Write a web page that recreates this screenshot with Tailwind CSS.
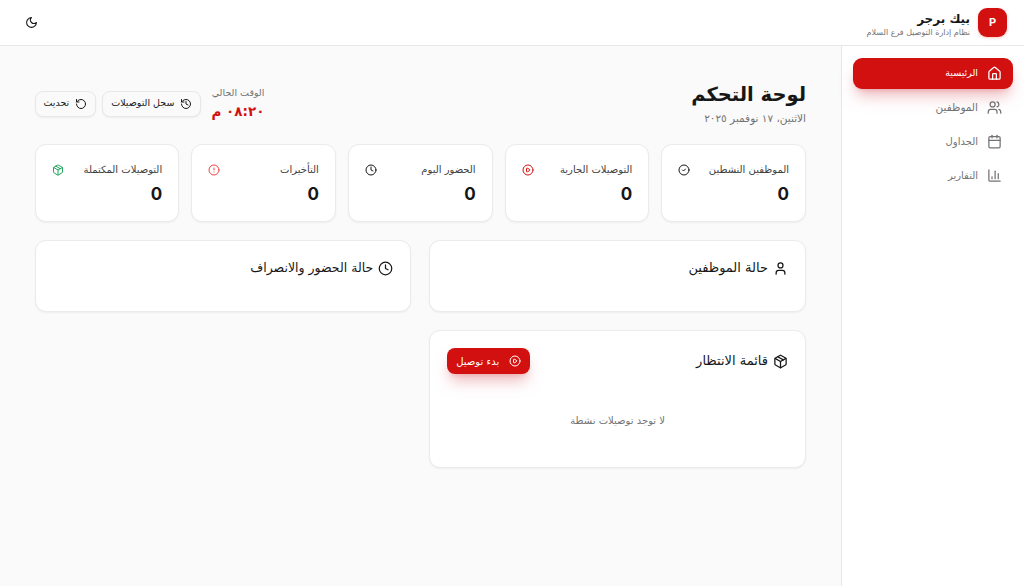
<!DOCTYPE html>
<html lang="ar" dir="rtl">
<head>
  <meta charset="UTF-8" />
  <meta name="viewport" content="width=device-width, initial-scale=1" />
  <title>لوحة التحكم | بيك برجر</title>
  <script src="https://cdn.jsdelivr.net/npm/@tailwindcss/browser@4"></script>
</head>
<body class="bg-[#fafafa] h-[586px] overflow-hidden flex flex-col text-[#171717] font-['DejaVu_Sans','Noto_Sans',sans-serif]">

  <header class="h-[46px] shrink-0 bg-white border-b border-[#e8e8e8] flex items-center justify-between pr-[17px] pl-[22px]">
    <div class="flex items-center gap-2">
      <div class="w-[29px] h-[29px] rounded-[9px] bg-[#d31010] text-white flex items-center justify-center text-[11px] font-bold font-['Inter',sans-serif] shadow-sm shadow-red-200">P</div>
      <div class="flex flex-col items-start mt-[4px]">
        <h1 class="text-[12px] leading-[16px] font-bold">بيك برجر</h1>
        <p class="text-[8px] leading-[11px] text-[#737373]">نظام إدارة التوصيل فرع السلام</p>
      </div>
    </div>
    <button class="w-4 h-4 text-[#171717]">
      <svg width="13" height="13" viewBox="0 0 24 24" fill="none" stroke="currentColor" stroke-width="2" stroke-linecap="round" stroke-linejoin="round"><path d="M12 3a6 6 0 0 0 9 9 9 9 0 1 1-9-9Z"/></svg>
    </button>
  </header>

  <div class="flex flex-1 min-h-0">
    <aside class="w-[183px] shrink-0 bg-white border-l border-[#e8e8e8] pt-[12px] px-[11px] flex flex-col gap-[3px] text-[10px]">
      <a class="h-[31px] rounded-[9px] bg-[#d31010] text-white flex items-center gap-[9px] px-[11px] shadow-lg shadow-red-700/25">
        <svg width="15" height="15" viewBox="0 0 24 24" fill="none" stroke="currentColor" stroke-width="2" stroke-linecap="round" stroke-linejoin="round"><path d="M15 21v-8a1 1 0 0 0-1-1h-4a1 1 0 0 0-1 1v8"/><path d="M3 10a2 2 0 0 1 .709-1.528l7-5.999a2 2 0 0 1 2.582 0l7 5.999A2 2 0 0 1 21 10v9a2 2 0 0 1-2 2H5a2 2 0 0 1-2-2z"/></svg>
        <span class="text-[9.5px]">الرئيسية</span>
      </a>
      <a class="h-[31px] rounded-[9px] text-[#737373] flex items-center gap-[9px] px-[11px]">
        <svg width="15" height="15" viewBox="0 0 24 24" fill="none" stroke="currentColor" stroke-width="2" stroke-linecap="round" stroke-linejoin="round"><path d="M16 21v-2a4 4 0 0 0-4-4H6a4 4 0 0 0-4 4v2"/><circle cx="9" cy="7" r="4"/><path d="M22 21v-2a4 4 0 0 0-3-3.87"/><path d="M16 3.13a4 4 0 0 1 0 7.75"/></svg>
        <span class="text-[10.5px]">الموظفين</span>
      </a>
      <a class="h-[31px] rounded-[9px] text-[#737373] flex items-center gap-[9px] px-[11px]">
        <svg width="15" height="15" viewBox="0 0 24 24" fill="none" stroke="currentColor" stroke-width="2" stroke-linecap="round" stroke-linejoin="round"><path d="M8 2v4"/><path d="M16 2v4"/><rect width="18" height="18" x="3" y="4" rx="2"/><path d="M3 10h18"/></svg>
        <span>الجداول</span>
      </a>
      <a class="h-[31px] rounded-[9px] text-[#737373] flex items-center gap-[9px] px-[11px]">
        <svg width="15" height="15" viewBox="0 0 24 24" fill="none" stroke="currentColor" stroke-width="2" stroke-linecap="round" stroke-linejoin="round"><path d="M3 3v16a2 2 0 0 0 2 2h16"/><path d="M18 17V9"/><path d="M13 17V5"/><path d="M8 17v-3"/></svg>
        <span>التقارير</span>
      </a>
    </aside>

    <main class="flex-1 pt-[34px] pr-[35px] pl-[34.5px]">
      <div class="flex items-center justify-between h-[47px]">
        <div>
          <h2 class="text-[19.5px] leading-[28px] font-bold">لوحة التحكم</h2>
          <p class="text-[10.5px] leading-[15px] mt-[2px] text-[#737373]">الاثنين، ١٧ نوفمبر ٢٠٢٥</p>
        </div>
        <div class="flex items-center gap-[6px]">
          <div class="flex flex-col items-start ml-[4px]">
            <span class="text-[9.5px] leading-[14px] text-[#737373]">الوقت الحالي</span>
            <span class="text-[13.5px] leading-[22px] font-bold text-[#d31010]">٠٨:٢٠ م</span>
          </div>
          <button class="h-[26px] px-[8px] rounded-[8px] border border-[#e8e8e8] bg-[#fafafa] flex items-center gap-[6px] text-[9.5px] shadow-xs">
            <svg width="12" height="12" viewBox="0 0 24 24" fill="none" stroke="currentColor" stroke-width="2" stroke-linecap="round" stroke-linejoin="round"><path d="M3 12a9 9 0 1 0 9-9 9.75 9.75 0 0 0-6.74 2.74L3 8"/><path d="M3 3v5h5"/><path d="M12 7v5l4 2"/></svg>
            <span>سجل التوصيلات</span>
          </button>
          <button class="h-[26px] px-[8px] rounded-[8px] border border-[#e8e8e8] bg-[#fafafa] flex items-center gap-[6px] text-[9.5px] shadow-xs">
            <svg width="12" height="12" viewBox="0 0 24 24" fill="none" stroke="currentColor" stroke-width="2" stroke-linecap="round" stroke-linejoin="round"><path d="M3 12a9 9 0 1 0 9-9 9.75 9.75 0 0 0-6.74 2.74L3 8"/><path d="M3 3v5h5"/></svg>
            <span>تحديث</span>
          </button>
        </div>
      </div>

      <div class="grid grid-cols-5 gap-3 mt-[17px]">
        <div class="h-[78px] bg-white border border-[#ebebeb] rounded-[11px] shadow-xs pt-[17px] px-[16px]">
          <div class="flex items-center justify-between h-[15px] text-[10px] text-[#404040]">
            <span>الموظفين النشطين</span>
            <svg width="12" height="12" viewBox="0 0 24 24" fill="none" stroke="#171717" stroke-width="2" stroke-linecap="round" stroke-linejoin="round"><circle cx="12" cy="12" r="10"/><path d="m9 12 2 2 4-4"/></svg>
          </div>
          <div class="mt-[5px] text-[17px] leading-[24px] font-bold font-['Inter',sans-serif]">0</div>
        </div>
        <div class="h-[78px] bg-white border border-[#ebebeb] rounded-[11px] shadow-xs pt-[17px] px-[16px]">
          <div class="flex items-center justify-between h-[15px] text-[10px] text-[#404040]">
            <span>التوصيلات الجارية</span>
            <svg width="12" height="12" viewBox="0 0 24 24" fill="none" stroke="#d31010" stroke-width="2" stroke-linecap="round" stroke-linejoin="round"><circle cx="12" cy="12" r="10"/><path d="M9 9.003a1 1 0 0 1 1.517-.859l4.997 2.997a1 1 0 0 1 0 1.718l-4.997 2.997A1 1 0 0 1 9 14.996z"/></svg>
          </div>
          <div class="mt-[5px] text-[17px] leading-[24px] font-bold font-['Inter',sans-serif]">0</div>
        </div>
        <div class="h-[78px] bg-white border border-[#ebebeb] rounded-[11px] shadow-xs pt-[17px] px-[16px]">
          <div class="flex items-center justify-between h-[15px] text-[10px] text-[#404040]">
            <span>الحضور اليوم</span>
            <svg width="12" height="12" viewBox="0 0 24 24" fill="none" stroke="#171717" stroke-width="2" stroke-linecap="round" stroke-linejoin="round"><circle cx="12" cy="12" r="10"/><path d="M12 6v6l4 2"/></svg>
          </div>
          <div class="mt-[5px] text-[17px] leading-[24px] font-bold font-['Inter',sans-serif]">0</div>
        </div>
        <div class="h-[78px] bg-white border border-[#ebebeb] rounded-[11px] shadow-xs pt-[17px] px-[16px]">
          <div class="flex items-center justify-between h-[15px] text-[10px] text-[#404040]">
            <span>التأخيرات</span>
            <svg width="12" height="12" viewBox="0 0 24 24" fill="none" stroke="#ef4444" stroke-width="2" stroke-linecap="round" stroke-linejoin="round"><circle cx="12" cy="12" r="10"/><path d="M12 8v4"/><path d="M12 16h.01"/></svg>
          </div>
          <div class="mt-[5px] text-[17px] leading-[24px] font-bold font-['Inter',sans-serif]">0</div>
        </div>
        <div class="h-[78px] bg-white border border-[#ebebeb] rounded-[11px] shadow-xs pt-[17px] px-[16px]">
          <div class="flex items-center justify-between h-[15px] text-[10px] text-[#404040]">
            <span>التوصيلات المكتملة</span>
            <svg width="12" height="12" viewBox="0 0 24 24" fill="none" stroke="#22a45d" stroke-width="2" stroke-linecap="round" stroke-linejoin="round"><path d="M11 21.73a2 2 0 0 0 2 0l7-4A2 2 0 0 0 21 16V8a2 2 0 0 0-1-1.73l-7-4a2 2 0 0 0-2 0l-7 4A2 2 0 0 0 3 8v8a2 2 0 0 0 1 1.73z"/><path d="M12 22V12"/><path d="m3.3 7 8.7 5 8.7-5"/><path d="m7.5 4.27 9 5.15"/></svg>
          </div>
          <div class="mt-[5px] text-[17px] leading-[24px] font-bold font-['Inter',sans-serif]">0</div>
        </div>
      </div>

      <div class="grid grid-cols-2 gap-[18px] mt-[18px] items-start">
        <div class="flex flex-col gap-[18px]">
          <section class="h-[72px] bg-white border border-[#ebebeb] rounded-[11px] shadow-xs pt-[18px] px-[17px]">
            <h3 class="flex items-center gap-[5px] text-[13px] leading-[18px] font-medium">
              <svg width="15" height="15" viewBox="0 0 24 24" fill="none" stroke="currentColor" stroke-width="2" stroke-linecap="round" stroke-linejoin="round"><path d="M19 21v-2a4 4 0 0 0-4-4H9a4 4 0 0 0-4 4v2"/><circle cx="12" cy="7" r="4"/></svg>
              حالة الموظفين
            </h3>
          </section>
          <section class="h-[138px] bg-white border border-[#ebebeb] rounded-[11px] shadow-xs pt-[17px] px-[17px]">
            <div class="flex items-center justify-between h-[26px]">
              <h3 class="flex items-center gap-[5px] text-[13px] leading-[18px] font-medium">
                <svg width="15" height="15" viewBox="0 0 24 24" fill="none" stroke="currentColor" stroke-width="2" stroke-linecap="round" stroke-linejoin="round"><path d="M11 21.73a2 2 0 0 0 2 0l7-4A2 2 0 0 0 21 16V8a2 2 0 0 0-1-1.73l-7-4a2 2 0 0 0-2 0l-7 4A2 2 0 0 0 3 8v8a2 2 0 0 0 1 1.73z"/><path d="M12 22V12"/><path d="m3.3 7 8.7 5 8.7-5"/><path d="m7.5 4.27 9 5.15"/></svg>
                قائمة الانتظار
              </h3>
              <button class="h-[26px] w-[83px] rounded-[8px] bg-[#d31010] text-white flex items-center justify-center gap-[10px] text-[10px] shadow-lg shadow-red-700/25">
                <svg width="12" height="12" viewBox="0 0 24 24" fill="none" stroke="currentColor" stroke-width="2" stroke-linecap="round" stroke-linejoin="round"><circle cx="12" cy="12" r="10"/><path d="M9 9.003a1 1 0 0 1 1.517-.859l4.997 2.997a1 1 0 0 1 0 1.718l-4.997 2.997A1 1 0 0 1 9 14.996z"/></svg>
                <span>بدء توصيل</span>
              </button>
            </div>
            <p class="text-center text-[10px] leading-[15px] text-[#737373] mt-[39px]">لا توجد توصيلات نشطة</p>
          </section>
        </div>
        <section class="h-[72px] bg-white border border-[#ebebeb] rounded-[11px] shadow-xs pt-[18px] px-[17px]">
          <h3 class="flex items-center gap-[5px] text-[12.5px] leading-[18px] font-medium">
            <svg width="15" height="15" viewBox="0 0 24 24" fill="none" stroke="currentColor" stroke-width="2" stroke-linecap="round" stroke-linejoin="round"><circle cx="12" cy="12" r="10"/><path d="M12 6v6l4 2"/></svg>
            حالة الحضور والانصراف
          </h3>
        </section>
      </div>
    </main>
  </div>

</body>
</html>
